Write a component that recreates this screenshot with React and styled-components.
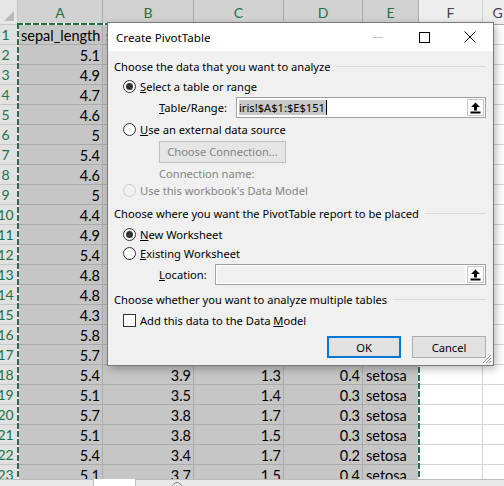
import React from "react";
import styled, { createGlobalStyle } from "styled-components";

const GlobalStyle = createGlobalStyle`
  html, body {
    margin: 0;
    padding: 0;
    background: #fff;
    overflow: hidden;
  }
`;

const Window = styled.div`
  position: relative;
  width: 504px;
  height: 486px;
  display: flex;
  flex-direction: column;
  overflow: hidden;
`;

const SheetArea = styled.div`
  position: relative;
  flex: 1;
  overflow: hidden;
`;

const Grid = styled.div`
  display: grid;
  grid-template-columns: 18px 85px 91px 90px 79px 56px 64px 30px;
  grid-template-rows: 25px;
  grid-auto-rows: 20px;
  font-family: "Lato", "Liberation Sans", sans-serif;
  font-size: 14.5px;
  color: #000;
`;

const Corner = styled.div`
  box-sizing: border-box;
  background: #e6e6e6;
  border-right: 1px solid #c6c6c6;
  border-bottom: 1px solid #c6c6c6;
  display: flex;
  align-items: flex-end;
  justify-content: flex-end;
  padding: 0 3px 3px 0;
`;

const ColHead = styled.div`
  box-sizing: border-box;
  background: ${({ $sel }) => ($sel ? "#d2d2d2" : "#eeeeee")};
  color: ${({ $sel }) => ($sel ? "#217346" : "#444")};
  border-right: 1px solid ${({ $sel }) => ($sel ? "#ababab" : "#d0d0d0")};
  border-bottom: 1px solid #ababab;
  display: flex;
  align-items: center;
  justify-content: center;
  font-size: 14px;
`;

const RowHead = styled.div`
  box-sizing: border-box;
  background: #e1e1e1;
  color: #217346;
  border-right: 1px solid #ababab;
  border-bottom: 1px solid #c6c6c6;
  display: flex;
  align-items: center;
  justify-content: center;
  padding-right: 6px;
  overflow: hidden;
  white-space: nowrap;
  font-size: 14px;
`;

const Cell = styled.div`
  box-sizing: border-box;
  background: ${({ $sel }) => ($sel ? "#c6c6c6" : "#fff")};
  border-right: 1px solid ${({ $sel }) => ($sel ? "#ababab" : "#d4d4d4")};
  border-bottom: 1px solid ${({ $sel }) => ($sel ? "#ababab" : "#d4d4d4")};
  display: flex;
  align-items: center;
  justify-content: ${({ $num }) => ($num ? "flex-end" : "flex-start")};
  padding: 1px 2px 0 3px;
  white-space: nowrap;
  overflow: hidden;
`;

const Ants = styled.div`
  position: absolute;
  left: 17px;
  top: 23px;
  width: 403px;
  height: 700px;
  pointer-events: none;
  background:
    repeating-linear-gradient(90deg, #217346 0 6px, #fff 6px 8px) top left / 100% 2px no-repeat,
    repeating-linear-gradient(180deg, #217346 0 6px, #fff 6px 8px) top left / 2px 100% no-repeat,
    repeating-linear-gradient(180deg, #217346 0 6px, #fff 6px 8px) top right / 2px 100% no-repeat;
`;

const TabBar = styled.div`
  height: 7px;
  flex-shrink: 0;
  display: flex;
  background: #e9e9e9;
  border-top: 1px solid #bdbdbd;
  box-sizing: border-box;
`;

const Tab = styled.div`
  width: 41px;
  margin-left: 93px;
  margin-top: -1px;
  background: #fff;
  border-left: 1px solid #bdbdbd;
  border-right: 1px solid #bdbdbd;
`;

const AddDot = styled.div`
  width: 10px;
  height: 10px;
  margin: 2px 0 0 36px;
  border-radius: 50%;
  border: 1px solid #888;
  box-sizing: border-box;
`;

/* dialog */

const Dialog = styled.div`
  position: absolute;
  left: 107px;
  top: 22px;
  width: 387px;
  height: 344px;
  box-sizing: border-box;
  border: 1px solid #7a7a7a;
  background: #f0f0f0;
  box-shadow: 2px 3px 8px rgba(0, 0, 0, 0.28);
  font-family: "Noto Sans", "Open Sans", sans-serif;
  font-size: 11.15px;
  color: #000;
  display: flex;
  flex-direction: column;
`;

const TitleBar = styled.div`
  height: 28px;
  background: #fff;
  display: flex;
  align-items: center;
  padding-left: 8px;
  font-size: 11.6px;
`;

const Caption = styled.div`
  margin-left: auto;
  display: flex;
  height: 100%;
`;

const CapButton = styled.div`
  width: 46px;
  height: 100%;
  display: flex;
  align-items: center;
  justify-content: center;
`;

const Body = styled.div`
  position: relative;
  flex: 1;
  display: flex;
  flex-direction: column;
  padding: 0 7px 0 6px;
`;

const Heading = styled.div`
  height: 20px;
  margin-top: ${({ $mt }) => $mt || 0}px;
  display: flex;
  align-items: center;
  white-space: nowrap;
  &::after {
    content: "";
    flex: 1;
    height: 1px;
    background: #dadada;
    margin-left: 6px;
  }
`;

const Row = styled.div`
  height: ${({ $h }) => $h}px;
  margin-top: ${({ $mt }) => $mt || 0}px;
  display: flex;
  align-items: center;
  padding-left: ${({ $indent }) => $indent}px;
  color: ${({ $off }) => ($off ? "#838383" : "#000")};
  white-space: nowrap;
`;

const Radio = styled.span`
  width: 13px;
  height: 13px;
  flex-shrink: 0;
  box-sizing: border-box;
  border-radius: 50%;
  border: 1px solid ${({ $off }) => ($off ? "#cccccc" : "#333")};
  background: ${({ $off }) => ($off ? "#f0f0f0" : "#fff")};
  margin-right: 4px;
  display: flex;
  align-items: center;
  justify-content: center;
  &::after {
    content: "";
    display: ${({ $on }) => ($on ? "block" : "none")};
    width: 7px;
    height: 7px;
    border-radius: 50%;
    background: #333;
  }
`;

const Check = styled.span`
  width: 13px;
  height: 13px;
  flex-shrink: 0;
  box-sizing: border-box;
  border: 1px solid #333;
  background: #fff;
  margin-right: 4px;
`;

const Label = styled.span`
  width: ${({ $w }) => $w}px;
  flex-shrink: 0;
`;

const RangeBox = styled.div`
  flex: 1;
  height: 21px;
  box-sizing: border-box;
  border: 1px solid #a0a0a0;
  background: #fff;
  padding: 1px;
  display: flex;
`;

const RangeInput = styled.div`
  flex: 1;
  display: flex;
  align-items: center;
  padding-left: 1px;
  background: ${({ $off }) => ($off ? "#f0f0f0" : "#fff")};
  margin-right: 2px;
`;

const Selected = styled.span`
  background: #c8c8c8;
  border-right: 1px solid #000;
  line-height: 15px;
  padding-right: 1px;
`;

const PickButton = styled.div`
  width: 17px;
  box-sizing: border-box;
  border: 1px solid #c8c8c8;
  background: #fff;
  display: flex;
  align-items: center;
  justify-content: center;
`;

const Button = styled.div`
  width: ${({ $w }) => $w || 74}px;
  height: 22px;
  box-sizing: border-box;
  background: #e1e1e1;
  border: ${({ $focus }) => ($focus ? "2px solid #0078d7" : "1px solid #adadad")};
  color: ${({ $off }) => ($off ? "#838383" : "#000")};
  display: flex;
  align-items: center;
  justify-content: center;
  ${({ $off }) => $off && "border-color: #bfbfbf; background: #e5e5e5;"}
`;

const Buttons = styled.div`
  margin-top: 5px;
  display: flex;
  justify-content: flex-end;
  gap: 11px;
`;

const Grip = styled.svg`
  position: absolute;
  right: 1px;
  bottom: 1px;
`;

const data = [
  ["sepal_length", "sepal_width", "petal_length", "petal_width", "species"],
  [5.1, 3.5, 1.4, 0.2],
  [4.9, 3, 1.4, 0.2],
  [4.7, 3.2, 1.3, 0.2],
  [4.6, 3.1, 1.5, 0.2],
  [5, 3.6, 1.4, 0.2],
  [5.4, 3.9, 1.7, 0.4],
  [4.6, 3.4, 1.4, 0.3],
  [5, 3.4, 1.5, 0.2],
  [4.4, 2.9, 1.4, 0.2],
  [4.9, 3.1, 1.5, 0.1],
  [5.4, 3.7, 1.5, 0.2],
  [4.8, 3.4, 1.6, 0.2],
  [4.8, 3, 1.4, 0.1],
  [4.3, 3, 1.1, 0.1],
  [5.8, 4, 1.2, 0.2],
  [5.7, 4.4, 1.5, 0.4],
  [5.4, 3.9, 1.3, 0.4],
  [5.1, 3.5, 1.4, 0.3],
  [5.7, 3.8, 1.7, 0.3],
  [5.1, 3.8, 1.5, 0.3],
  [5.4, 3.4, 1.7, 0.2],
  [5.1, 3.7, 1.5, 0.4],
];

const letters = ["A", "B", "C", "D", "E", "F", "G"];

const UpArrow = () => (
  <svg width="11" height="12" viewBox="0 0 11 12">
    <path d="M5.5 0.5 L10 5 H7 V8.5 H4 V5 H1 Z" fill="#000" />
    <rect x="0.5" y="9.5" width="10" height="2" fill="#000" />
  </svg>
);

const RangeField = ({ value, off }) => (
  <RangeBox>
    <RangeInput $off={off}>{value && <Selected>{value}</Selected>}</RangeInput>
    <PickButton>
      <UpArrow />
    </PickButton>
  </RangeBox>
);

const Sheet = () => (
  <SheetArea>
    <Grid>
      <Corner>
        <svg width="10" height="10" viewBox="0 0 10 10">
          <path d="M10 0 V10 H0 Z" fill="#b8b8b8" />
        </svg>
      </Corner>
      {letters.map((l, i) => (
        <ColHead key={l} $sel={i < 5}>
          {l}
        </ColHead>
      ))}
      {data.map((row, r) => (
        <React.Fragment key={r}>
          <RowHead>{r + 1}</RowHead>
          {r === 0
            ? row.map((v, c) => (
                <Cell key={c} $sel>
                  {v}
                </Cell>
              ))
            : row.map((v, c) => (
                <Cell key={c} $sel $num>
                  {v}
                </Cell>
              ))}
          {r > 0 && <Cell $sel>setosa</Cell>}
          <Cell />
          <Cell />
        </React.Fragment>
      ))}
    </Grid>
    <Ants />
  </SheetArea>
);

const PivotDialog = () => (
  <Dialog>
    <TitleBar>
      Create PivotTable
      <Caption>
        <CapButton>
          <svg width="10" height="1">
            <rect width="10" height="1" fill="#c4c4c4" />
          </svg>
        </CapButton>
        <CapButton>
          <svg width="11" height="11">
            <rect x="0.5" y="0.5" width="10" height="10" fill="none" stroke="#000" />
          </svg>
        </CapButton>
        <CapButton>
          <svg width="12" height="12">
            <path d="M0.5 0.5 L11.5 11.5 M11.5 0.5 L0.5 11.5" stroke="#000" strokeWidth="1" />
          </svg>
        </CapButton>
      </Caption>
    </TitleBar>
    <Body>
      <Heading $mt={5}>Choose the data that you want to analyze</Heading>
      <Row $h={21} $indent={9}>
        <Radio $on />
        <span>
          <u>S</u>elect a table or range
        </span>
      </Row>
      <Row $h={21} $indent={45}>
        <Label $w={77}>
          <u>T</u>able/Range:
        </Label>
        <RangeField value="iris!$A$1:$E$151" />
      </Row>
      <Row $h={22} $indent={9}>
        <Radio />
        <span>
          <u>U</u>se an external data source
        </span>
      </Row>
      <Row $h={21} $mt={1} $indent={45}>
        <Button $w={127} $off>
          Choose Connection...
        </Button>
      </Row>
      <Row $h={22} $indent={45} $off>
        Connection name:
      </Row>
      <Row $h={13} $indent={9} $off>
        <Radio $off />
        Use this workbook's Data Model
      </Row>
      <Heading $mt={6}>Choose where you want the PivotTable report to be placed</Heading>
      <Row $h={22} $indent={9}>
        <Radio $on />
        <span>
          <u>N</u>ew Worksheet
        </span>
      </Row>
      <Row $h={17} $indent={9}>
        <Radio />
        <span>
          <u>E</u>xisting Worksheet
        </span>
      </Row>
      <Row $h={21} $mt={2} $indent={45}>
        <Label $w={56}>
          <u>L</u>ocation:
        </Label>
        <RangeField off />
      </Row>
      <Heading $mt={4}>Choose whether you want to analyze multiple tables</Heading>
      <Row $h={22} $indent={9}>
        <Check />
        <span>
          Add this data to the Data <u>M</u>odel
        </span>
      </Row>
      <Buttons>
        <Button $focus>OK</Button>
        <Button>Cancel</Button>
      </Buttons>
      <Grip width="10" height="10" viewBox="0 0 10 10">
        <path d="M9 1 L1 9 M9 4 L4 9 M9 7 L7 9" stroke="#9a9a9a" strokeWidth="1" />
      </Grip>
    </Body>
  </Dialog>
);

const App = () => (
  <>
    <GlobalStyle />
    <Window>
      <Sheet />
      <TabBar>
        <Tab />
        <AddDot />
      </TabBar>
      <PivotDialog />
    </Window>
  </>
);

export default App;
